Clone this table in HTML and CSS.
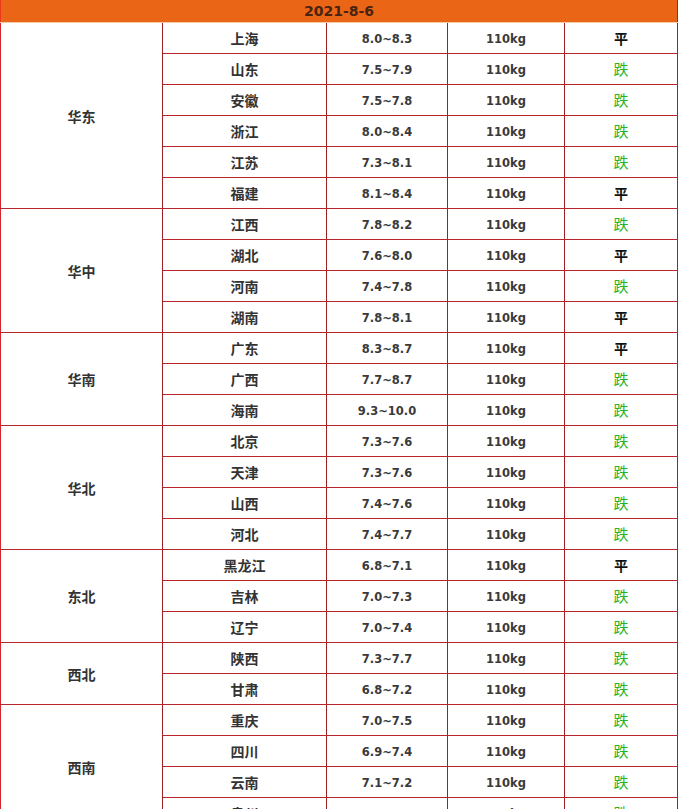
FILE: index.html
```html
<!DOCTYPE html>
<html lang="zh">
<head>
<meta charset="utf-8">
<title>2021-8-6</title>
<link rel="stylesheet" href="styles.css">
</head>
<body>
<table class="price">
  <colgroup>
    <col class="c-region"><col class="c-prov"><col class="c-price"><col class="c-weight"><col class="c-trend">
  </colgroup>
  <thead>
    <tr><th colspan="5" class="date">2021-8-6</th></tr>
  </thead>
  <tbody>
    <tr><td rowspan="6" class="region">华东</td><td>上海</td><td>8.0~8.3</td><td>110kg</td><td class="flat">平</td></tr>
    <tr><td>山东</td><td>7.5~7.9</td><td>110kg</td><td class="down">跌</td></tr>
    <tr><td>安徽</td><td>7.5~7.8</td><td>110kg</td><td class="down">跌</td></tr>
    <tr><td>浙江</td><td>8.0~8.4</td><td>110kg</td><td class="down">跌</td></tr>
    <tr><td>江苏</td><td>7.3~8.1</td><td>110kg</td><td class="down">跌</td></tr>
    <tr><td>福建</td><td>8.1~8.4</td><td>110kg</td><td class="flat">平</td></tr>

    <tr><td rowspan="4" class="region">华中</td><td>江西</td><td>7.8~8.2</td><td>110kg</td><td class="down">跌</td></tr>
    <tr><td>湖北</td><td>7.6~8.0</td><td>110kg</td><td class="flat">平</td></tr>
    <tr><td>河南</td><td>7.4~7.8</td><td>110kg</td><td class="down">跌</td></tr>
    <tr><td>湖南</td><td>7.8~8.1</td><td>110kg</td><td class="flat">平</td></tr>

    <tr><td rowspan="3" class="region">华南</td><td>广东</td><td>8.3~8.7</td><td>110kg</td><td class="flat">平</td></tr>
    <tr><td>广西</td><td>7.7~8.7</td><td>110kg</td><td class="down">跌</td></tr>
    <tr><td>海南</td><td>9.3~10.0</td><td>110kg</td><td class="down">跌</td></tr>

    <tr><td rowspan="4" class="region">华北</td><td>北京</td><td>7.3~7.6</td><td>110kg</td><td class="down">跌</td></tr>
    <tr><td>天津</td><td>7.3~7.6</td><td>110kg</td><td class="down">跌</td></tr>
    <tr><td>山西</td><td>7.4~7.6</td><td>110kg</td><td class="down">跌</td></tr>
    <tr><td>河北</td><td>7.4~7.7</td><td>110kg</td><td class="down">跌</td></tr>

    <tr><td rowspan="3" class="region">东北</td><td>黑龙江</td><td>6.8~7.1</td><td>110kg</td><td class="flat">平</td></tr>
    <tr><td>吉林</td><td>7.0~7.3</td><td>110kg</td><td class="down">跌</td></tr>
    <tr><td>辽宁</td><td>7.0~7.4</td><td>110kg</td><td class="down">跌</td></tr>

    <tr><td rowspan="2" class="region">西北</td><td>陕西</td><td>7.3~7.7</td><td>110kg</td><td class="down">跌</td></tr>
    <tr><td>甘肃</td><td>6.8~7.2</td><td>110kg</td><td class="down">跌</td></tr>

    <tr><td rowspan="4" class="region">西南</td><td>重庆</td><td>7.0~7.5</td><td>110kg</td><td class="down">跌</td></tr>
    <tr><td>四川</td><td>6.9~7.4</td><td>110kg</td><td class="down">跌</td></tr>
    <tr><td>云南</td><td>7.1~7.2</td><td>110kg</td><td class="down">跌</td></tr>
    <tr><td>贵州</td><td>7.0~7.3</td><td>110kg</td><td class="down">跌</td></tr>
  </tbody>
</table>
</body>
</html>
```

FILE: styles.css
```css
html, body {
  margin: 0;
  padding: 0;
  background: #ffffff;
}

body {
  font-family: "Noto Sans CJK SC", "DejaVu Sans", sans-serif;
  font-size: 14px;
  font-weight: bold;
  color: #333333;
}

.price {
  border-collapse: collapse;
  width: 677px;
  table-layout: fixed;
}

.c-region { width: 162px; }
.c-prov { width: 164px; }
.c-price { width: 121px; }
.c-weight { width: 117px; }
.c-trend { width: 113px; }

.price th.date {
  background: #eb6517;
  color: #4a2410;
  height: 22px;
  padding: 0;
  line-height: 22px;
  font-family: "DejaVu Sans", sans-serif;
  font-size: 14px;
  text-align: center;
  border-left: 1px solid #e83a1a;
  border-right: 1px solid #9a2a2a;
  border-bottom: 1px solid #f6c9a8;
}

.price td {
  height: 30px;
  padding: 0;
  text-align: center;
  vertical-align: middle;
  line-height: 20px;
  border: 1px solid #b8262b;
  border-left-color: #9c2226;
  border-right-color: #9c2226;
}

.price td:nth-last-child(2),
.price td:nth-last-child(3) {
  font-family: "DejaVu Sans", sans-serif;
  font-size: 11.5px;
  color: #3a3a3a;
  padding-top: 2px;
  height: 28px;
}

.price td.region {
  border-left-color: #d0282c;
}

.price td.flat {
  color: #111111;
}

.price td.down {
  color: #26b426;
  font-weight: normal;
  font-size: 15px;
}
```
